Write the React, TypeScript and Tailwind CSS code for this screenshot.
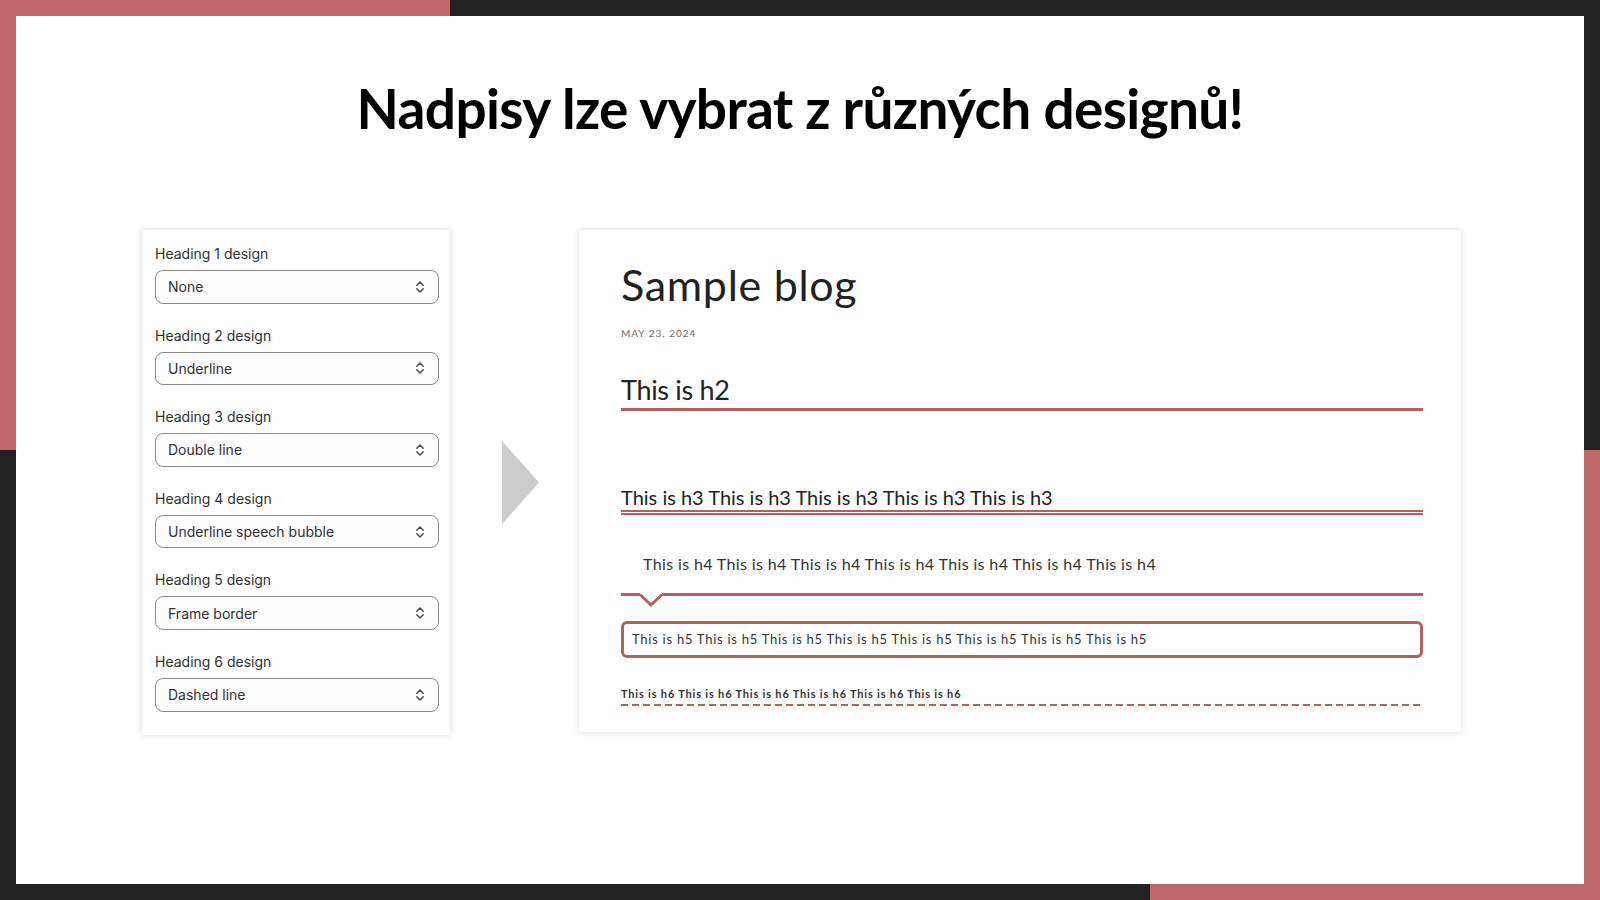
import { type ReactNode } from "react"

const designs = [
  { label: "Heading 1 design", value: "None" },
  { label: "Heading 2 design", value: "Underline" },
  { label: "Heading 3 design", value: "Double line" },
  { label: "Heading 4 design", value: "Underline speech bubble" },
  { label: "Heading 5 design", value: "Frame border" },
  { label: "Heading 6 design", value: "Dashed line" },
]

function SelectIcon() {
  return (
    <svg viewBox="0 0 20 20" className="h-5 w-5" fill="none" stroke="#4a4a4a" strokeWidth="1.5" strokeLinecap="round" strokeLinejoin="round">
      <path d="M6.8 8.2 10 5l3.2 3.2" />
      <path d="M6.8 11.8 10 15l3.2-3.2" />
    </svg>
  )
}

function DesignSelect({ label, value }: { label: string; value: string }) {
  return (
    <div className="mb-[22px]">
      <p className="h-5 text-[14px] leading-5 text-[#303030]">{label}</p>
      <div className="mt-1.5 flex h-[33.6px] items-center justify-between rounded-lg border border-[#8a8a8a] bg-[#fdfdfd] pl-3 pr-2">
        <span className="text-[14px] text-[#303030]">{value}</span>
        <SelectIcon />
      </div>
    </div>
  )
}

function Repeat({ text, times }: { text: string; times: number }) {
  return <>{Array.from({ length: times }, () => text).join(" ")}</>
}

function Card({ children, className }: { children: ReactNode; className: string }) {
  return <div className={`bg-white shadow-[0_0_6px_rgba(0,0,0,0.16)] ${className}`}>{children}</div>
}

export default function App() {
  return (
    <div className="flex h-[900px] w-[1600px] flex-col bg-[#222222]">
      {/* top frame */}
      <div className="flex h-4">
        <div className="w-[450px] bg-[#c0686a]" />
        <div className="flex-1" />
      </div>

      <div className="flex flex-1">
        <div className="flex w-4 flex-col">
          <div className="h-[434px] bg-[#c0686a]" />
          <div className="flex-1" />
        </div>

        <main className="flex flex-1 flex-col bg-white pt-[65px]">
          <h1 className="text-center font-['Lato',sans-serif] text-[55px] font-bold leading-none tracking-[-0.66px] text-black">
            Nadpisy lze vybrat z různých designů!
          </h1>

          <div className="mt-[94px] flex items-start pl-[126px]">
            {/* settings panel */}
            <Card className="w-[308px] pb-[1px] pl-[13px] pr-[11px] pt-[14px] font-['Inter',sans-serif]">
              {designs.map((d) => (
                <DesignSelect key={d.label} label={d.label} value={d.value} />
              ))}
            </Card>

            <svg viewBox="0 0 37 83" className="ml-[52px] h-[83px] w-[37px] self-center">
              <path d="M0 0 37 41.5 0 83Z" fill="#cccccc" />
            </svg>

            {/* blog preview */}
            <Card className="ml-10 h-[502px] w-[882px] pl-[42px] pr-[38px] pt-[33px] font-['Lato',sans-serif] text-[#222222]">
              <h2 className="text-[43px] font-normal leading-none tracking-[0.7px]">Sample blog</h2>
              <p className="mt-[21.6px] text-[10px] leading-none tracking-[1px] text-[#6b6b6b]">MAY 23, 2024</p>

              <h3 className="mt-[38px] border-b-[3px] border-[#b4605e] pb-[5.6px] text-[27px] leading-none tracking-[-0.3px]">This is h2</h3>

              <h4 className="mt-[76px] border-b-[5px] border-double border-[#b4605e] pb-[2.7px] text-[20px] leading-none">
                <Repeat text="This is h3" times={5} />
              </h4>

              <div className="mt-[41px]">
                <h5 className="pl-[22px] text-[16px] leading-none tracking-[0.37px] text-[#333333]">
                  <Repeat text="This is h4" times={7} />
                </h5>
                <div className="mt-[21px] flex h-[14px] items-start">
                  <div className="h-[3px] w-[19px] bg-[#b4605e]" />
                  <svg viewBox="0 0 22 14" className="h-[14px] w-[22px] overflow-visible">
                    <path d="M0 1.5 11 12 22 1.5" fill="none" stroke="#b4605e" strokeWidth="3" />
                  </svg>
                  <div className="h-[3px] flex-1 bg-[#b4605e]" />
                </div>
              </div>

              <h6 className="mt-[13.7px] flex h-[37px] items-center rounded-md border-[3px] border-[#b4605e] pl-2 text-[13px] leading-none tracking-[0.74px] text-[#333333]">
                <Repeat text="This is h5" times={8} />
              </h6>

              <div className="mt-[30.6px]">
                <p className="text-[11px] font-bold leading-none tracking-[0.82px] text-[#333333]">
                  <Repeat text="This is h6" times={6} />
                </p>
                <div className="mt-[5px] h-[2px] bg-[repeating-linear-gradient(to_right,#b4605e_0_7px,transparent_7px_11px)]" />
              </div>
            </Card>
          </div>
        </main>

        <div className="flex w-4 flex-col">
          <div className="h-[434px]" />
          <div className="flex-1 bg-[#c0686a]" />
        </div>
      </div>

      {/* bottom frame */}
      <div className="flex h-4">
        <div className="w-[1150px]" />
        <div className="flex-1 bg-[#c0686a]" />
      </div>
    </div>
  )
}
